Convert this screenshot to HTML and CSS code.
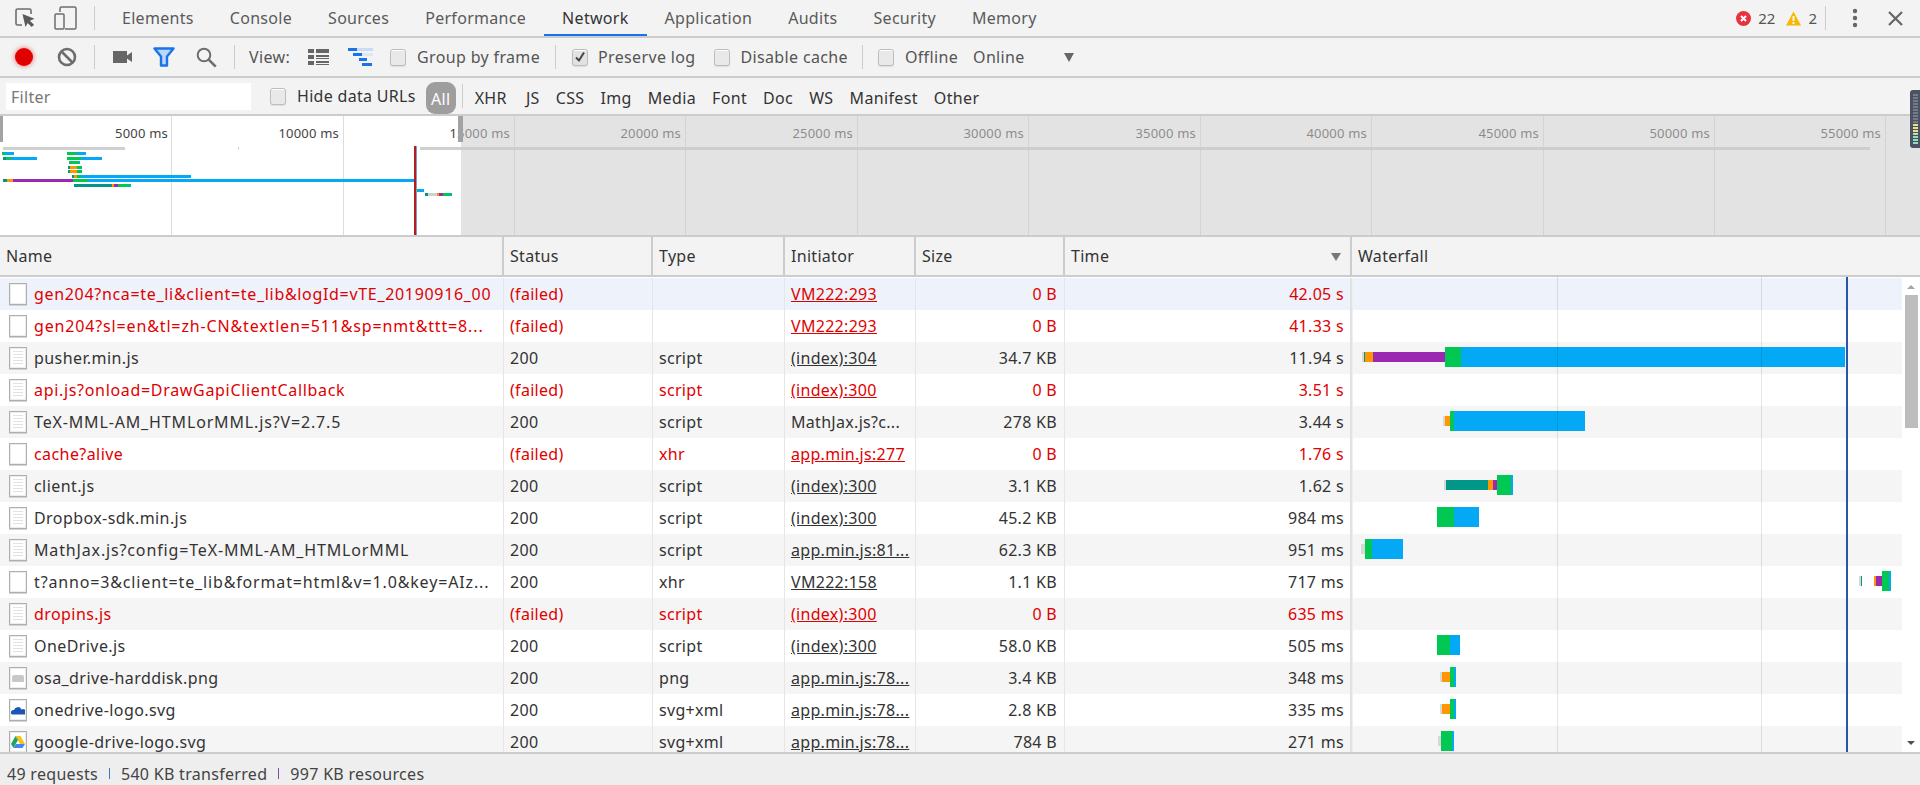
FILE: index.html
```html
<!DOCTYPE html>
<html lang="en">
<head>
<meta charset="utf-8">
<title>Network</title>
<link rel="stylesheet" href="styles.css">
</head>
<body>
<div class="devtools">

  <header class="tabbar">
    <button class="ic ic-inspect"><svg width="20" height="20" viewBox="0 0 20 20"><path d="M7 17H2.500A1.500 1.500 0 0 1 1 15.500V2.500A1.500 1.500 0 0 1 2.500 1h12A1.500 1.500 0 0 1 16 2.500V6" fill="none" stroke="#6e6e6e" stroke-width="1.600"/><path d="M7.500 6l12 4.800-4.600 1.900 4.100 4.100-2.300 2.200-4-4.100L10.500 19z" fill="#5a5a5a"/></svg></button>
    <button class="ic ic-device"><svg width="23" height="24" viewBox="0 0 23 24"><path d="M6 6V2.500A1.500 1.500 0 0 1 7.500 1h13A1.500 1.500 0 0 1 22 2.500v19a1.500 1.500 0 0 1-1.500 1.500H11" fill="none" stroke="#6e6e6e" stroke-width="1.500"/><rect x="1" y="8" width="9" height="15" rx="1" fill="none" stroke="#6e6e6e" stroke-width="1.500"/></svg></button>
    <span class="sep sep-tabs"></span>
    <nav class="tabs">
      <a class="tab">Elements</a><a class="tab">Console</a><a class="tab">Sources</a><a class="tab">Performance</a><a class="tab active">Network</a><a class="tab">Application</a><a class="tab">Audits</a><a class="tab">Security</a><a class="tab">Memory</a>
    </nav>
    <div class="tab-right">
      <svg class="err" width="15" height="15" viewBox="0 0 15 15"><circle cx="7.500" cy="7.500" r="7.500" fill="#e8333c"/><path d="M5 5l5 5M10 5l-5 5" stroke="#fff" stroke-width="2"/></svg>
      <span class="count">22</span>
      <svg class="warn" width="15" height="15" viewBox="0 0 15 15"><path d="M7.500.5L15 14.500H0z" fill="#f6b800"/><path d="M7.500 5v5M7.500 11v2" stroke="#fff" stroke-width="1.800"/></svg>
      <span class="count">2</span>
      <span class="sep sep-right"></span>
      <svg class="dots" width="6" height="20" viewBox="0 0 6 20"><circle cx="3" cy="3" r="2.200" fill="#666"/><circle cx="3" cy="10" r="2.200" fill="#666"/><circle cx="3" cy="17" r="2.200" fill="#666"/></svg>
      <svg class="close" width="15" height="15" viewBox="0 0 15 15"><path d="M1 1l13 13M14 1L1 14" stroke="#666" stroke-width="2.200"/></svg>
    </div>
  </header>

  <section class="toolbar">
    <span class="record"></span>
    <svg class="t-clear" width="20" height="20" viewBox="0 0 20 20"><circle cx="10" cy="10" r="8" fill="none" stroke="#6e6e6e" stroke-width="2.600"/><path d="M4.500 4.500l11 11" stroke="#6e6e6e" stroke-width="2.600"/></svg>
    <span class="sep sep-a"></span>
    <svg class="t-cam" width="19" height="12" viewBox="0 0 19 12"><rect x="0" y="0" width="14" height="12" fill="#666"/><path d="M14 4.500L19 1v10l-5-3.500z" fill="#666"/></svg>
    <svg class="t-filter" width="22" height="20" viewBox="0 0 22 20"><path d="M1.500 1.500h19l-6.500 8v9h-6v-9z" fill="#bcd6f8" stroke="#1a73e8" stroke-width="2.400" stroke-linejoin="round"/></svg>
    <svg class="t-search" width="21" height="21" viewBox="0 0 21 21"><circle cx="8" cy="8" r="6.300" fill="none" stroke="#6e6e6e" stroke-width="2"/><path d="M12.700 12.700l7 7" stroke="#6e6e6e" stroke-width="2.600"/></svg>
    <span class="sep sep-b"></span>
    <span class="lbl lbl-view">View:</span>
    <svg class="t-list" width="21" height="16" viewBox="0 0 21 16"><path d="M0 0h6v4H0zM8 0h13v4H8zM0 6h6v4H0zM8 6h13v2H8zM8 9h13v1H8zM0 12h6v4H0zM8 12h13v2H8zM8 15h13v1H8z" fill="#666"/></svg>
    <svg class="t-wf" width="25" height="18" viewBox="0 0 25 18"><path d="M0 0h25v3H0z" fill="#c9dcf7"/><path d="M0 0h9v3H0zM5 5h9v3H5zM11 10h8v3h-8zM14 15h10v3H14z" fill="#1a73e8"/><path d="M14 5h11v3H14z" fill="#c9dcf7" opacity=".5"/></svg>
    <span class="cb cb-group"></span><span class="lbl">Group by frame</span>
    <span class="sep sep-c"></span>
    <span class="cb cb-preserve checked"><svg width="12" height="12" viewBox="0 0 12 12"><path d="M2 6.500l3 3 5-8" fill="none" stroke="#444" stroke-width="2"/></svg></span><span class="lbl lbl-preserve">Preserve log</span>
    <span class="cb cb-cache"></span><span class="lbl">Disable cache</span>
    <span class="sep sep-d"></span>
    <span class="cb cb-off"></span><span class="lbl">Offline</span>
    <span class="lbl lbl-online">Online</span>
    <span class="tri"></span>
  </section>

  <section class="filterbar">
    <div class="filter-input">Filter</div>
    <span class="cb cb-hide"></span><span class="lbl lbl-hide">Hide data URLs</span>
    <span class="pill">All</span>
    <span class="sep sep-e"></span>
    <span class="ft ft-xhr">XHR</span><span class="ft">JS</span><span class="ft">CSS</span><span class="ft">Img</span><span class="ft">Media</span><span class="ft">Font</span><span class="ft">Doc</span><span class="ft">WS</span><span class="ft">Manifest</span><span class="ft">Other</span>
  </section>

  <section class="overview">
    <i class="grid" style="left:171px"></i><i class="grid" style="left:343px"></i><i class="grid" style="left:514px"></i><i class="grid" style="left:685px"></i><i class="grid" style="left:857px"></i><i class="grid" style="left:1028px"></i><i class="grid" style="left:1200px"></i><i class="grid" style="left:1371px"></i><i class="grid" style="left:1543px"></i><i class="grid" style="left:1714px"></i><i class="grid" style="left:1885px"></i>
    <span class="tl" style="left:68px">5000 ms</span><span class="tl" style="left:239px">10000 ms</span><span class="tl" style="left:410px">15000 ms</span><span class="tl" style="left:581px">20000 ms</span><span class="tl" style="left:753px">25000 ms</span><span class="tl" style="left:924px">30000 ms</span><span class="tl" style="left:1096px">35000 ms</span><span class="tl" style="left:1267px">40000 ms</span><span class="tl" style="left:1439px">45000 ms</span><span class="tl" style="left:1610px">50000 ms</span><span class="tl" style="left:1781px">55000 ms</span>

    <i class="ob gray" style="left:3px;width:122px;top:31px"></i><i class="ob gray" style="left:238px;width:1px;top:31px"></i><i class="ob gray" style="left:420px;width:1450px;top:31px"></i>

    <i class="ob green" style="left:2px;width:3px;top:36px"></i><i class="ob blue" style="left:5px;width:9px;top:36px"></i><i class="ob green" style="left:67px;width:10px;top:36px"></i><i class="ob blue" style="left:77px;width:9px;top:36px"></i>
    <i class="ob teal" style="left:3px;width:3px;top:41px"></i><i class="ob green" style="left:6px;width:5px;top:41px"></i><i class="ob blue" style="left:11px;width:26px;top:41px"></i><i class="ob green" style="left:67px;width:14px;top:41px"></i><i class="ob blue" style="left:81px;width:21px;top:41px"></i>
    <i class="ob green" style="left:69px;width:10px;top:45px"></i><i class="ob blue" style="left:79px;width:1px;top:45px"></i>
    <i class="ob teal" style="left:68px;width:2px;top:50px"></i><i class="ob orange" style="left:70px;width:7px;top:50px"></i><i class="ob green" style="left:77px;width:5px;top:50px"></i>
    <i class="ob teal" style="left:68px;width:2px;top:54px"></i><i class="ob orange" style="left:70px;width:7px;top:54px"></i><i class="ob green" style="left:77px;width:5px;top:54px"></i>
    <i class="ob teal" style="left:72px;width:2px;top:59px"></i><i class="ob orange" style="left:74px;width:3px;top:59px"></i><i class="ob green" style="left:77px;width:4px;top:59px"></i><i class="ob blue" style="left:81px;width:110px;top:59px"></i>
    <i class="ob teal" style="left:3px;width:4px;top:63px"></i><i class="ob orange" style="left:7px;width:6px;top:63px"></i><i class="ob purple" style="left:13px;width:60px;top:63px"></i><i class="ob green" style="left:73px;width:15px;top:63px"></i><i class="ob blue" style="left:88px;width:326px;top:63px"></i>
    <i class="ob teal" style="left:74px;width:38px;top:68px"></i><i class="ob orange" style="left:112px;width:2px;top:68px"></i><i class="ob purple" style="left:114px;width:4px;top:68px"></i><i class="ob green" style="left:118px;width:12px;top:68px"></i><i class="ob blue" style="left:130px;width:1px;top:68px"></i>
    <i class="ob green" style="left:416px;width:2px;top:73px"></i><i class="ob blue" style="left:418px;width:6px;top:73px"></i>
    <i class="ob teal" style="left:425px;width:3px;top:77px"></i><i class="ob gray" style="left:428px;width:9px;top:77px"></i><i class="ob orange" style="left:437px;width:2px;top:77px"></i><i class="ob purple" style="left:439px;width:4px;top:77px"></i><i class="ob green" style="left:443px;width:8px;top:77px"></i><i class="ob blue" style="left:451px;width:1px;top:77px"></i>

    <i class="curtain"></i>
    <i class="red-line"></i>
    <i class="handle handle-l"></i>
    <i class="handle handle-r"></i>
    <div class="meter"></div>
  </section>

  <section class="thead">
    <div class="th c-name">Name</div><div class="th c-status">Status</div><div class="th c-type">Type</div><div class="th c-init">Initiator</div><div class="th c-size">Size</div><div class="th c-time">Time<span class="sort"></span></div><div class="th c-wf">Waterfall</div>
  </section>

  <section class="tbody">
    <div class="rows">

      <div class="row hover fail"><div class="td c-name"><span class="file"></span><span class="nm mid">gen204?nca=te_li&amp;client=te_lib&amp;logId=vTE_20190916_00</span></div><div class="td c-status">(failed)</div><div class="td c-type"></div><div class="td c-init"><u>VM222:293</u></div><div class="td c-size">0 B</div><div class="td c-time">42.05 s</div><div class="td c-wf"></div></div>

      <div class="row fail"><div class="td c-name"><span class="file"></span><span class="nm wide">gen204?sl=en&amp;tl=zh-CN&amp;textlen=511&amp;sp=nmt&amp;ttt=8...</span></div><div class="td c-status">(failed)</div><div class="td c-type"></div><div class="td c-init"><u>VM222:293</u></div><div class="td c-size">0 B</div><div class="td c-time">41.33 s</div><div class="td c-wf"></div></div>

      <div class="row"><div class="td c-name"><span class="file js"></span><span class="nm">pusher.min.js</span></div><div class="td c-status">200</div><div class="td c-type">script</div><div class="td c-init"><u>(index):304</u></div><div class="td c-size">34.7 KB</div><div class="td c-time">11.94 s</div><div class="td c-wf"><i class="b thin gray" style="left:9px;width:2px"></i><i class="b thin teal" style="left:11px;width:1px"></i><i class="b thin orange" style="left:12px;width:8px"></i><i class="b thin purple" style="left:20px;width:72px"></i><i class="b green" style="left:92px;width:16px"></i><i class="b blue" style="left:108px;width:384px"></i></div></div>

      <div class="row fail"><div class="td c-name"><span class="file js"></span><span class="nm mid">api.js?onload=DrawGapiClientCallback</span></div><div class="td c-status">(failed)</div><div class="td c-type">script</div><div class="td c-init"><u>(index):300</u></div><div class="td c-size">0 B</div><div class="td c-time">3.51 s</div><div class="td c-wf"></div></div>

      <div class="row"><div class="td c-name"><span class="file js"></span><span class="nm wide">TeX-MML-AM_HTMLorMML.js?V=2.7.5</span></div><div class="td c-status">200</div><div class="td c-type">script</div><div class="td c-init">MathJax.js?c...</div><div class="td c-size">278 KB</div><div class="td c-time">3.44 s</div><div class="td c-wf"><i class="b thin gray" style="left:90px;width:2px"></i><i class="b thin orange" style="left:92px;width:5px"></i><i class="b green" style="left:97px;width:4px"></i><i class="b blue" style="left:101px;width:131px"></i></div></div>

      <div class="row fail"><div class="td c-name"><span class="file"></span><span class="nm">cache?alive</span></div><div class="td c-status">(failed)</div><div class="td c-type">xhr</div><div class="td c-init"><u>app.min.js:277</u></div><div class="td c-size">0 B</div><div class="td c-time">1.76 s</div><div class="td c-wf"></div></div>

      <div class="row"><div class="td c-name"><span class="file js"></span><span class="nm">client.js</span></div><div class="td c-status">200</div><div class="td c-type">script</div><div class="td c-init"><u>(index):300</u></div><div class="td c-size">3.1 KB</div><div class="td c-time">1.62 s</div><div class="td c-wf"><i class="b thin gray" style="left:91px;width:2px"></i><i class="b thin teal" style="left:93px;width:42px"></i><i class="b thin orange" style="left:135px;width:5px"></i><i class="b thin purple" style="left:140px;width:4px"></i><i class="b green" style="left:144px;width:14px"></i><i class="b blue" style="left:158px;width:2px"></i></div></div>

      <div class="row"><div class="td c-name"><span class="file js"></span><span class="nm">Dropbox-sdk.min.js</span></div><div class="td c-status">200</div><div class="td c-type">script</div><div class="td c-init"><u>(index):300</u></div><div class="td c-size">45.2 KB</div><div class="td c-time">984 ms</div><div class="td c-wf"><i class="b green" style="left:84px;width:17px"></i><i class="b blue" style="left:101px;width:25px"></i></div></div>

      <div class="row"><div class="td c-name"><span class="file js"></span><span class="nm wide">MathJax.js?config=TeX-MML-AM_HTMLorMML</span></div><div class="td c-status">200</div><div class="td c-type">script</div><div class="td c-init"><u>app.min.js:81...</u></div><div class="td c-size">62.3 KB</div><div class="td c-time">951 ms</div><div class="td c-wf"><i class="b thin gray" style="left:8px;width:4px"></i><i class="b green" style="left:12px;width:7px"></i><i class="b blue" style="left:19px;width:31px"></i></div></div>

      <div class="row"><div class="td c-name"><span class="file"></span><span class="nm wide">t?anno=3&amp;client=te_lib&amp;format=html&amp;v=1.0&amp;key=AIz...</span></div><div class="td c-status">200</div><div class="td c-type">xhr</div><div class="td c-init"><u>VM222:158</u></div><div class="td c-size">1.1 KB</div><div class="td c-time">717 ms</div><div class="td c-wf"><i class="b thin gray" style="left:506px;width:2px"></i><i class="b thin teal" style="left:508px;width:1px"></i><i class="b thin orange" style="left:521px;width:2px"></i><i class="b thin purple" style="left:523px;width:6px"></i><i class="b green" style="left:529px;width:7px"></i><i class="b blue" style="left:536px;width:2px"></i></div></div>

      <div class="row fail"><div class="td c-name"><span class="file js"></span><span class="nm">dropins.js</span></div><div class="td c-status">(failed)</div><div class="td c-type">script</div><div class="td c-init"><u>(index):300</u></div><div class="td c-size">0 B</div><div class="td c-time">635 ms</div><div class="td c-wf"></div></div>

      <div class="row"><div class="td c-name"><span class="file js"></span><span class="nm">OneDrive.js</span></div><div class="td c-status">200</div><div class="td c-type">script</div><div class="td c-init"><u>(index):300</u></div><div class="td c-size">58.0 KB</div><div class="td c-time">505 ms</div><div class="td c-wf"><i class="b green" style="left:84px;width:13px"></i><i class="b blue" style="left:97px;width:10px"></i></div></div>

      <div class="row"><div class="td c-name"><span class="file"><i class="disk"></i></span><span class="nm">osa_drive-harddisk.png</span></div><div class="td c-status">200</div><div class="td c-type">png</div><div class="td c-init"><u>app.min.js:78...</u></div><div class="td c-size">3.4 KB</div><div class="td c-time">348 ms</div><div class="td c-wf"><i class="b thin gray" style="left:87px;width:2px"></i><i class="b thin orange" style="left:89px;width:8px"></i><i class="b green" style="left:97px;width:4px"></i><i class="b blue" style="left:101px;width:2px"></i></div></div>

      <div class="row"><div class="td c-name"><span class="file"><svg width="14" height="9" viewBox="0 0 14 9"><path d="M1 8.500A2.500 2.500 0 0 1 3 4 4 4 0 0 1 10.500 3.500 2.800 2.800 0 0 1 13.500 8.500z" fill="#1a56b8"/></svg></span><span class="nm">onedrive-logo.svg</span></div><div class="td c-status">200</div><div class="td c-type">svg+xml</div><div class="td c-init"><u>app.min.js:78...</u></div><div class="td c-size">2.8 KB</div><div class="td c-time">335 ms</div><div class="td c-wf"><i class="b thin gray" style="left:87px;width:2px"></i><i class="b thin orange" style="left:89px;width:8px"></i><i class="b green" style="left:97px;width:4px"></i><i class="b blue" style="left:101px;width:2px"></i></div></div>

      <div class="row"><div class="td c-name"><span class="file"><svg width="14" height="12" viewBox="0 0 14 12"><path d="M4.500 0h5l4.500 8h-5z" fill="#f6c21c"/><path d="M4.500 0L0 8l2.500 4 4.500-8z" fill="#1fa463"/><path d="M2.500 12h9l2.500-4H5z" fill="#4285f4"/></svg></span><span class="nm">google-drive-logo.svg</span></div><div class="td c-status">200</div><div class="td c-type">svg+xml</div><div class="td c-init"><u>app.min.js:78...</u></div><div class="td c-size">784 B</div><div class="td c-time">271 ms</div><div class="td c-wf"><i class="b thin gray" style="left:85px;width:3px"></i><i class="b green" style="left:88px;width:11px"></i><i class="b blue" style="left:99px;width:2px"></i></div></div>

    </div>
    <i class="wf-line" style="left:1557px"></i>
    <i class="wf-line" style="left:1761px"></i>
    <i class="wf-load"></i>
    <div class="scrollbar"><span class="sb-up"></span><span class="sb-thumb"></span><span class="sb-down"></span></div>
  </section>

  <footer class="status">
    <span>49 requests</span><i class="st-sep"></i><span>540 KB transferred</span><i class="st-sep"></i><span>997 KB resources</span>
  </footer>
</div>
</body>
</html>
```

FILE: styles.css
```css
* { box-sizing: border-box; }
html, body { margin: 0; height: 100%; overflow: hidden; }
body { font-family: "Noto Sans", "Open Sans", sans-serif; font-size: 16px; letter-spacing: .3px; color: #333; background: #f3f3f3; }
.devtools { width: 1920px; height: 785px; display: flex; flex-direction: column; }

button { border: 0; padding: 0; background: none; display: block; }
i { display: block; font-style: normal; }
.sep { display: block; width: 1px; height: 24px; background: #ccc; flex: none; }

/* top tabs */
.tabbar { height: 38px; flex: none; display: flex; align-items: center; border-bottom: 2px solid #ccc; padding-left: 15px; }
.ic { flex: none; height: 24px; display: flex; align-items: center; }
.ic-device { margin-left: 19px; }
.sep-tabs { margin-left: 17px; }
.tabs { display: flex; height: 36px; margin-left: 9px; }
.tab { display: flex; align-items: center; padding: 0 18px; color: #5a5a5a; letter-spacing: .3px; }
.tab.active { color: #333; box-shadow: inset 0 -2px 0 #1a73e8; }
.tab-right { margin-left: auto; display: flex; align-items: center; color: #555; font-size: 15px; padding-right: 17px; letter-spacing: 0; }
.count { margin-left: 7px; }
.warn { margin-left: 11px; }
.sep-right { margin-left: 8px; }
.dots { margin-left: 26px; }
.close { margin-left: 30px; }

/* toolbar */
.toolbar { height: 40px; flex: none; display: flex; align-items: center; border-bottom: 2px solid #ccc; padding-left: 15px; color: #555; letter-spacing: .35px; }
.record { width: 18px; height: 18px; border-radius: 50%; background: #e00000; box-shadow: 0 0 4px 1px rgba(224,0,0,.4); flex: none; }
.t-clear { margin-left: 24px; flex: none; }
.sep-a { margin-left: 17px; }
.t-cam { margin-left: 18px; flex: none; }
.t-filter { margin-left: 21px; flex: none; }
.t-search { margin-left: 21px; flex: none; }
.sep-b { margin-left: 17px; }
.lbl { white-space: nowrap; flex: none; }
.lbl-view { margin-left: 14px; }
.t-list { margin-left: 18px; flex: none; }
.t-wf { margin-left: 19px; flex: none; }
.cb { width: 16px; height: 17px; flex: none; border: 1px solid #bdbdbd; border-radius: 3px; background: #e9e9e9; box-shadow: inset 0 1px 0 #fff, 0 1px 1px #ddd; margin-right: 11px; display: flex; align-items: center; justify-content: center; }
.cb.checked { background: #e2e2e2; margin-right: 10px; }
.cb-group { margin-left: 17px; }
.sep-c { margin-left: 15px; }
.cb-preserve { margin-left: 16px; }
.cb-cache { margin-left: 18px; }
.sep-d { margin-left: 14px; }
.cb-off { margin-left: 15px; }
.lbl-online { margin-left: 15px; }
.tri { width: 0; height: 0; margin-left: 39px; border-left: 5px solid transparent; border-right: 5px solid transparent; border-top: 9px solid #666; flex: none; }

/* filter bar */
.filterbar { height: 38px; flex: none; display: flex; align-items: center; border-bottom: 2px solid #ccc; padding-left: 6px; color: #333; }
.filter-input { width: 245px; height: 27px; background: #fff; color: #777; padding: 2px 0 0 5px; line-height: 25px; flex: none; }
.cb-hide { margin-left: 19px; margin-right: 11px; }
.pill { width: 30px; height: 32px; margin: 3px 0 0 10px; padding-top: 2px; border-radius: 9px; background: #9e9e9e; color: #fff; display: flex; align-items: center; justify-content: center; flex: none; }
.sep-e { margin-left: 6px; margin-right: 4px; }
.ft { padding: 3px 8px 0; flex: none; letter-spacing: .35px; }
.ft-xhr { padding-right: 11px; }

/* overview */
.overview { position: relative; height: 121px; flex: none; background: #fff; border-bottom: 2px solid #ccc; }
.grid { position: absolute; top: 0; bottom: 0; width: 1px; background: #ddd; }
.tl { position: absolute; top: 8px; width: 100px; text-align: right; font-size: 13px; letter-spacing: .2px; color: #444; white-space: nowrap; }
.ob { position: absolute; height: 3px; }
.ob.gray { background: #d0d0d0; }
.curtain { position: absolute; left: 461px; right: 0; top: 0; bottom: 0; background: rgba(203,203,203,.535); }
.red-line { position: absolute; left: 414px; top: 30px; bottom: 0; width: 2px; background: #b01d20; box-shadow: 1px 0 0 #8b97c4; }
.handle { position: absolute; top: 0; height: 26px; background: #a3a3a3; }
.handle-l { left: 0; width: 3px; }
.handle-r { left: 458px; width: 5px; }
.meter { position: absolute; right: 0; top: -26px; width: 10px; height: 58px; background: #4c5263; border-radius: 3px 0 0 3px; padding: 4px 2px 4px 3px; }
.meter::before { content: ""; display: block; height: 100%; background: repeating-linear-gradient(transparent 0 2px, #4c5263 2px 3px), linear-gradient(#767b88 0 58%, #e6e38a 58% 80%, #8fe0c0 80%); }

.b.gray { background: #d8d8d8; }
.green { background: #00c853; }
.blue { background: #03a9f4; }
.teal { background: #009688; }
.orange { background: #ff9800; }
.purple { background: #9c27b0; }

/* table */
.thead { height: 40px; flex: none; display: flex; border-bottom: 2px solid #ccc; color: #333; }
.th { display: flex; align-items: center; padding: 0 6px; border-right: 2px solid #ccc; position: relative; }
.c-name { width: 504px; flex: none; }
.c-status { width: 149px; flex: none; }
.c-type { width: 132px; flex: none; }
.c-init { width: 131px; flex: none; }
.c-size { width: 149px; flex: none; justify-content: flex-end; }
.c-time { width: 287px; flex: none; justify-content: flex-end; }
.th.c-size, .th.c-time { justify-content: flex-start; }
.c-wf { flex: 1; }
.th.c-wf { border-right: 0; }
.sort { position: absolute; right: 9px; top: 16px; border-left: 5px solid transparent; border-right: 5px solid transparent; border-top: 8px solid #777; }

.tbody { position: relative; flex: 1; min-height: 0; overflow: hidden; background: #fff; }
.rows { width: 1902px; padding-top: 1px; }
.row { height: 32px; display: flex; background: #fff; color: #333; }
.row:nth-child(odd) { background: #f5f5f5; }
.row.hover { background: #eef3fb; }
.row.fail { color: #e00000; }
.td { display: flex; align-items: center; padding: 0 6px; white-space: nowrap; overflow: hidden; position: relative; border-right: 1px solid #e6e6e6; }
.td.c-size { padding-right: 7px; }
.td.c-time { padding-right: 6px; border-right: 2px solid #e2e2e2; }
.td.c-wf { overflow: visible; padding: 0; border-right: 0; border-left: 1px solid #efefef; }
.c-name.td { padding-left: 9px; }
.c-name .nm { letter-spacing: .42px; }
.c-name .nm.mid { letter-spacing: .68px; }
.c-name .nm.wide { letter-spacing: .85px; }
.c-wf .b { position: absolute; top: 5px; height: 20px; }
.c-wf .b.thin { top: 10px; height: 10px; }

.file { width: 18px; height: 22px; flex: none; margin-right: 7px; background: #fff; border: 1px solid #aeaeae; box-shadow: inset 0 0 0 1px #ececec, 0 1px 0 #d5d5d5; display: flex; align-items: center; justify-content: center; }
.file.js { background: repeating-linear-gradient(#e2e2e2 0 1px, #fff 1px 3px) 3px 3px / 10px 14px no-repeat #fff; }
.disk { width: 12px; height: 7px; border-radius: 2px 2px 1px 1px; background: #c8c8c8; }

.wf-line { position: absolute; top: 0; bottom: 0; width: 1px; background: rgba(0,0,0,.1); }
.wf-load { position: absolute; left: 1846px; top: 0; bottom: 0; width: 2px; background: #2a55ab; }
.scrollbar { position: absolute; right: 0; top: 0; bottom: 0; width: 18px; background: #fff; display: flex; flex-direction: column; align-items: center; }
.sb-up { margin-top: 8px; border-left: 4px solid transparent; border-right: 4px solid transparent; border-bottom: 4px solid #a6a6a6; flex: none; }
.sb-thumb { width: 13px; height: 133px; margin-top: 6px; background: #bdbdbd; flex: none; }
.sb-down { margin-top: auto; margin-bottom: 7px; border-left: 4px solid transparent; border-right: 4px solid transparent; border-top: 4px solid #505050; flex: none; }

/* status bar */
.status { height: 33px; flex: none; border-top: 2px solid #ccc; background: #eee; display: flex; align-items: center; padding: 8px 0 0 7px; color: #444; }
.st-sep { width: 1px; height: 11px; background: #3a76c4; margin: 0 11px; }
.st-sep + span + .st-sep { background: #7a4fa3; }
```
